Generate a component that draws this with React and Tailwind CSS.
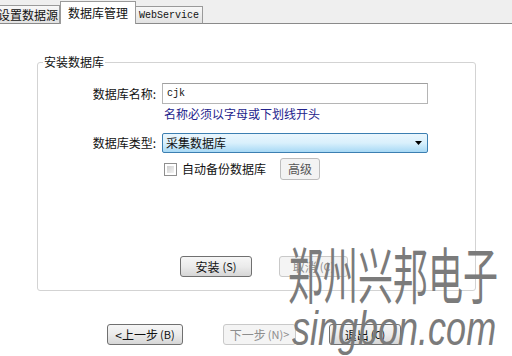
import React from "react";

const cjk = { fontFamily: '"Noto Sans CJK SC", "Liberation Sans", sans-serif' };
const mono = { fontFamily: '"Liberation Mono", monospace' };

function Btn({ children, w, disabled }) {
  return (
    <div
      className={`h-[21px] ${w} flex items-center justify-center rounded-[3px] border text-[12px] leading-none whitespace-nowrap ${
        disabled
          ? "border-[#c9c9c9] bg-[#f4f4f4] text-[#8d8d8d]"
          : "border-[#707070] bg-gradient-to-b from-[#f6f6f6] via-[#ebebeb] to-[#d6d6d6] text-[#111]"
      }`}
      style={cjk}
    >
      {children}
    </div>
  );
}

export default function App() {
  return (
    <div className="relative w-[512px] h-[356px] overflow-hidden bg-white" style={cjk}>
      {/* tab bar */}
      <div className="h-[24px] bg-[#efefef] border-b border-[#8a8a8a] flex items-end relative">
        <div className="h-[19px] w-[64px] -ml-[4px] shrink-0 mb-[-1px] border border-[#9a9a9a] border-b-[#8a8a8a] bg-gradient-to-b from-[#f8f8f8] to-[#e2e2e2] flex items-center pl-[1px] text-[12px] text-[#111] whitespace-nowrap overflow-hidden">
          设置数据源
        </div>
        <div className="h-[23px] w-[76px] shrink-0 mb-[-1px] border border-[#9a9a9a] border-b-0 bg-white flex items-center justify-center text-[12px] text-[#111] relative z-10 whitespace-nowrap">
          数据库管理
        </div>
        <div
          className="h-[18px] w-[67px] shrink-0 mb-[-1px] border border-[#9a9a9a] border-l-0 border-b-[#8a8a8a] bg-gradient-to-b from-[#f8f8f8] to-[#e2e2e2] flex items-center justify-center text-[10px] text-[#111]"
          style={mono}
        >
          WebService
        </div>
      </div>

      {/* group box */}
      <div className="ml-[37px] mt-[38px] w-[439px] relative border border-[#d3d3d3] rounded-[3px]">
        <span className="absolute -top-[9px] left-[5px] bg-white px-[1px] text-[12px] leading-[16px] text-[#111]">
          安装数据库
        </span>
        <div className="pt-[20px] pb-[13px]">
          <div className="flex items-center h-[21px]">
            <div className="w-[119px] text-right text-[12px] text-[#111] pr-[1px]">数据库名称:</div>
            <div
              className="ml-[5px] w-[266px] h-[21px] border border-[#b5b5b5] border-t-[#a0a0a0] flex items-center pl-[4px] text-[10px] text-[#111]"
              style={mono}
            >
              cjk
            </div>
          </div>
          <div className="mt-[3px] h-[14px] pl-[126px] text-[12px] leading-[14px] text-[#23238c]">
            名称必须以字母或下划线开头
          </div>
          <div className="mt-[12px] flex items-center h-[20px]">
            <div className="w-[119px] text-right text-[12px] text-[#111] pr-[1px]">数据库类型:</div>
            <div className="ml-[5px] w-[266px] h-[20px] rounded-[2px] border border-[#3c7fb1] bg-gradient-to-b from-[#eaf6fd] via-[#d9f0fc] to-[#a7d9f5] flex items-center justify-between pl-[3px] pr-[5px] text-[12px] text-[#111]">
              <span>采集数据库</span>
              <svg width="7" height="4" viewBox="0 0 7 4">
                <path d="M0 0h7L3.5 4z" fill="#000" />
              </svg>
            </div>
          </div>
          <div className="mt-[5px] flex items-center h-[22px] pl-[126px]">
            <div className="w-[13px] h-[13px] border border-[#8f8f8f] bg-white p-[2px]">
              <div className="w-full h-full bg-gradient-to-br from-[#cfcfcf] to-[#f3f3f3]" />
            </div>
            <span className="ml-[5px] text-[12px] text-[#111]">自动备份数据库</span>
            <div className="ml-[14px] w-[40px] h-[22px] rounded-[3px] border border-[#bdbdbd] bg-[#f3f3f3] flex items-center justify-center text-[12px] text-[#555]">
              高级
            </div>
          </div>
          <div className="mt-[76px] flex pl-[142px] gap-[27px]">
            <Btn w="w-[72px]">
              安装 <span className="ml-[3px] text-[11px]">(S)</span>
            </Btn>
            <Btn w="w-[69px]" disabled>
              取消 <span className="ml-[3px] text-[11px]">(C)</span>
            </Btn>
          </div>
        </div>
      </div>

      {/* bottom buttons */}
      <div className="mt-[33px] flex pl-[107px]">
        <Btn w="w-[76px]">
          &lt;上一步<span className="ml-[2px] text-[11px]">(B)</span>
        </Btn>
        <div className="ml-[40px]">
          <Btn w="w-[73px]" disabled>
            下一步<span className="ml-[2px] text-[11px]">(N)&gt;</span>
          </Btn>
        </div>
        <div className="ml-[33px]">
          <Btn w="w-[72px]">
            退出<span className="ml-[2px] text-[11px]">(C)</span>
          </Btn>
        </div>
      </div>

      {/* watermark */}
      <div className="absolute left-[288px] top-[241px] pointer-events-none text-[#7b7b7b]">
        <div className="text-[35px] leading-[35px] origin-top scale-y-[1.75] whitespace-nowrap" style={cjk}>
          郑州兴邦电子
        </div>
        <div
          className="mt-[28px] ml-[4px] text-[36px] leading-[36px] italic origin-top scale-y-[1.35] whitespace-nowrap"
          style={{ fontFamily: '"Liberation Sans", Arial, sans-serif' }}
        >
          singbon.com
        </div>
      </div>
    </div>
  );
}
